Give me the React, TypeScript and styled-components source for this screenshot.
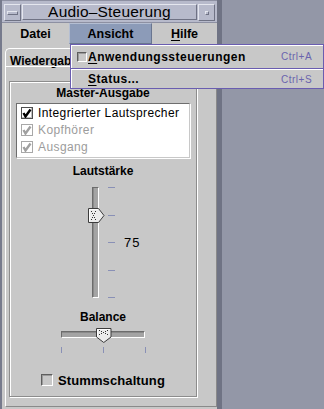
import React from 'react';
import styled, { createGlobalStyle } from 'styled-components';

const GlobalStyle = createGlobalStyle`
  html, body { margin: 0; padding: 0; }
  body {
    background: #9397a7;
    font-family: "Liberation Sans", Arial, sans-serif;
    color: #000;
  }
`;

const Screen = styled.div`
  position: relative;
  width: 324px;
  height: 409px;
  overflow: hidden;
`;

const Window = styled.div`
  width: 222px;
  height: 409px;
  box-sizing: border-box;
  background: #c8c8c8;
  border-left: 2px solid #767a8c;
  border-right: 5px solid #6f7384;
  display: flex;
  flex-direction: column;
`;

const TitleBar = styled.div`
  height: 23px;
  box-sizing: border-box;
  padding: 3px 2px 2px 2px;
  display: flex;
  gap: 1px;
  background: #b7bacb;
  border-top: 1px solid #8d90a2;
  border-bottom: 1px solid #8d90a2;
`;

const FrameButton = styled.div`
  width: 17px;
  height: 17px;
  box-sizing: border-box;
  border: 1px solid;
  border-color: #e4e6ee #6f7284 #6f7284 #e4e6ee;
  display: flex;
  align-items: center;
  justify-content: center;
`;

const Glyph = styled.span<{ $w: number; $h: number }>`
  width: ${p => p.$w}px;
  height: ${p => p.$h}px;
  box-sizing: border-box;
  border: 1px solid;
  border-color: #e4e6ee #6f7284 #6f7284 #e4e6ee;
`;

const TitleText = styled.div`
  flex: 1;
  box-sizing: border-box;
  border: 1px solid;
  border-color: #e4e6ee #6f7284 #6f7284 #e4e6ee;
  display: flex;
  align-items: center;
  justify-content: center;
  font-size: 15.5px;
  letter-spacing: 0.2px;
`;

const MenuBar = styled.div`
  height: 21px;
  display: flex;
  background: #c8c8c8;
`;

const MenuItem = styled.div<{ $w: number; $active?: boolean }>`
  width: ${p => p.$w}px;
  flex: none;
  box-sizing: border-box;
  display: flex;
  align-items: center;
  justify-content: center;
  font-size: 12.5px;
  font-weight: bold;
  background: ${p => (p.$active ? '#8c9bb8' : 'transparent')};
  border: 1px solid;
  border-color: ${p => (p.$active ? '#b4bed2 #6a7690 #6a7690 #b4bed2' : 'transparent')};
`;

const Mnemonic = styled.span`
  text-decoration: underline;
  text-underline-offset: 2px;
`;

const Body = styled.div`
  padding-left: 3px;
  display: flex;
  flex-direction: column;
`;

const TabStrip = styled.div`
  height: 22px;
  display: flex;
  align-items: flex-end;
`;

const Tab = styled.div`
  width: 100px;
  height: 18px;
  box-sizing: border-box;
  padding: 5px 0 0 4px;
  border-top: 1px solid #fff;
  border-left: 1px solid #fff;
  border-right: 1px solid #8a8a8a;
  border-top-left-radius: 5px;
  font-size: 12px;
  font-weight: bold;
  line-height: 14px;
  white-space: nowrap;
`;

const TabPanel = styled.div`
  width: 212px;
  box-sizing: border-box;
  padding: 14px 0 9px 3px;
  border: 1px solid;
  border-color: #fff #8a8a8a #8a8a8a #fff;
`;

const Group = styled.div`
  width: 188px;
  box-sizing: border-box;
  padding: 4px 0 9px 0;
  border: 1px solid #8c8c8c;
  box-shadow: inset 1px 1px 0 #fff, 1px 1px 0 #fff;
  display: flex;
  flex-direction: column;
  align-items: center;
`;

const Label = styled.div<{ $mt?: number }>`
  margin-top: ${p => p.$mt || 0}px;
  font-size: 12px;
  font-weight: bold;
  line-height: 14px;
`;

const List = styled.div`
  margin-top: 3px;
  width: 174px;
  box-sizing: border-box;
  padding-bottom: 2px;
  background: #fff;
  border: 1px solid;
  border-color: #6e6e6e #c8c8c8 #c8c8c8 #6e6e6e;
  box-shadow: 1px 1px 0 #fff;
  align-self: flex-start;
  margin-left: 6px;
`;

const ListRow = styled.div<{ $disabled?: boolean }>`
  height: 17px;
  display: flex;
  align-items: center;
  gap: 5px;
  padding-left: 4px;
  font-size: 12px;
  letter-spacing: 0.4px;
  color: ${p => (p.$disabled ? '#9c9c9c' : '#000')};
`;

const CheckBox = styled.span<{ $size: number; $bg: string; $disabled?: boolean }>`
  width: ${p => p.$size}px;
  height: ${p => p.$size}px;
  flex: none;
  box-sizing: border-box;
  background: ${p => p.$bg};
  border: 1px solid;
  border-color: ${p => (p.$disabled ? '#a8a8a8' : '#4e4e4e')};
  box-shadow: inset -1px -1px 0 ${p => (p.$disabled ? '#fff' : '#c0c0c0')};
  display: flex;
  align-items: center;
  justify-content: center;
`;

const PlainBox = styled.span<{ $size: number }>`
  width: ${p => p.$size}px;
  height: ${p => p.$size}px;
  flex: none;
  box-sizing: border-box;
  background: #c8c8c8;
  border: 1px solid;
  border-color: #5e5e5e #fff #fff #5e5e5e;
  box-shadow: inset 1px 1px 0 #9a9a9a;
`;

const VSliderRow = styled.div`
  margin-top: 9px;
  align-self: flex-start;
  margin-left: 78px;
  display: flex;
  height: 111px;
`;

const ThumbLane = styled.div`
  position: relative;
  width: 17px;
  height: 111px;
`;

const VTrack = styled.div`
  margin-left: 4px;
  width: 7px;
  height: 111px;
  box-sizing: border-box;
  background: #a4a4a4;
  border: 1px solid;
  border-color: #6c6c6c #fff #fff #6c6c6c;
  box-shadow: inset 1px 0 0 #8a8a8a;
`;

const Thumb = styled.svg`
  position: absolute;
`;

const TickColumn = styled.div`
  margin-left: 3px;
  width: 7px;
  display: flex;
  flex-direction: column;
  justify-content: space-between;
`;

const TickRow = styled.div`
  margin-top: 4px;
  width: 85px;
  height: 6px;
  display: flex;
  justify-content: space-between;
`;

const Tick = styled.span<{ $vertical?: boolean }>`
  display: block;
  background: #8990b6;
  width: ${p => (p.$vertical ? 1 : 7)}px;
  height: ${p => (p.$vertical ? 6 : 1)}px;
`;

const Value = styled.div`
  align-self: center;
  margin-left: 9px;
  font-size: 13px;
  letter-spacing: 1px;
`;

const HSlider = styled.div`
  position: relative;
  margin-top: 4px;
  width: 85px;
  height: 15px;
`;

const HTrack = styled.div`
  margin-top: 3px;
  width: 84px;
  height: 7px;
  box-sizing: border-box;
  background: #a4a4a4;
  border: 1px solid;
  border-color: #6c6c6c #fff #fff #6c6c6c;
  box-shadow: inset 0 1px 0 #8a8a8a;
`;

const MuteRow = styled.div`
  margin-top: 20px;
  height: 14px;
  display: flex;
  align-items: center;
  gap: 5px;
  font-size: 13px;
  font-weight: bold;
  letter-spacing: 0.1px;
`;

const Dropdown = styled.div`
  position: absolute;
  left: 70px;
  top: 44px;
  width: 254px;
  box-sizing: border-box;
  background: #c8c8c8;
  border: 1px solid #6a5db0;
  box-shadow: inset 1px 1px 0 #fff;
`;

const DropItem = styled.div<{ $h: number }>`
  height: ${p => p.$h}px;
  display: flex;
  align-items: center;
  padding-left: 6px;
  font-size: 12px;
  font-weight: bold;
  letter-spacing: 0.5px;
`;

const Indent = styled.span<{ $w: number }>`
  width: ${p => p.$w}px;
  flex: none;
`;

const Separator = styled.div`
  height: 1px;
  background: #6a5db0;
  border-bottom: 1px solid #fff;
`;

const Shortcut = styled.span`
  margin-left: auto;
  width: 42px;
  font-size: 10px;
  font-weight: normal;
  letter-spacing: 0.5px;
  color: #6a64ae;
`;

const Check = ({ disabled }: { disabled?: boolean }) => (
  <svg width="10" height="10" viewBox="0 0 10 10">
    <path d="M1.5 5 L3.5 8.5 L8.5 1.5" fill="none" stroke={disabled ? '#a0a0a0' : '#000'} strokeWidth="2.4" />
  </svg>
);

const dots = [
  [3, 3], [7, 3], [4, 5], [6, 5], [5, 7], [4, 9], [6, 9], [3, 11], [7, 11],
];

const VThumb = () => (
  <Thumb width="17" height="16" viewBox="0 0 17 16" style={{ left: 0, top: 21 }}>
    <path d="M0.5 0.5 H10.5 L16 7.5 L10.5 14.5 H0.5 Z" fill="#ececec" stroke="#3c3c3c" />
    <path d="M1.5 13.5 V1.5 H10" fill="none" stroke="#fff" />
    {dots.map(([x, y], i) => (
      <rect key={i} x={x} y={y} width="1" height="1" fill="#333" />
    ))}
  </Thumb>
);

const HThumb = () => (
  <Thumb width="16" height="15" viewBox="0 0 16 15" style={{ left: 35, top: 0 }}>
    <path d="M0.5 0.5 H15 V9 L7.75 14.5 L0.5 9 Z" fill="#ececec" stroke="#3c3c3c" />
    <path d="M1.5 8.5 V1.5 H14" fill="none" stroke="#fff" />
    {dots.map(([x, y], i) => (
      <rect key={i} x={y} y={x - 1} width="1" height="1" fill="#333" />
    ))}
  </Thumb>
);

export default function App() {
  return (
    <Screen>
      <GlobalStyle />
      <Window>
        <TitleBar>
          <FrameButton>
            <Glyph $w={11} $h={4} />
          </FrameButton>
          <TitleText>Audio–Steuerung</TitleText>
          <FrameButton>
            <Glyph $w={4} $h={4} />
          </FrameButton>
        </TitleBar>
        <MenuBar>
          <MenuItem $w={67}>Datei</MenuItem>
          <MenuItem $w={83} $active>Ansicht</MenuItem>
          <MenuItem $w={65}>
            <Mnemonic>H</Mnemonic>ilfe
          </MenuItem>
        </MenuBar>
        <Body>
          <TabStrip>
            <Tab>Wiedergabe</Tab>
          </TabStrip>
          <TabPanel>
            <Group>
              <Label>Master-Ausgabe</Label>
              <List>
                <ListRow>
                  <CheckBox $size={12} $bg="#fff"><Check /></CheckBox>
                  Integrierter Lautsprecher
                </ListRow>
                <ListRow $disabled>
                  <CheckBox $size={12} $bg="#fff" $disabled><Check disabled /></CheckBox>
                  Kopfhörer
                </ListRow>
                <ListRow $disabled>
                  <CheckBox $size={12} $bg="#fff" $disabled><Check disabled /></CheckBox>
                  Ausgang
                </ListRow>
              </List>
              <Label $mt={6}>Lautstärke</Label>
              <VSliderRow>
                <ThumbLane>
                  <VTrack />
                  <VThumb />
                </ThumbLane>
                <TickColumn>
                  <Tick /><Tick /><Tick /><Tick /><Tick />
                </TickColumn>
                <Value>75</Value>
              </VSliderRow>
              <Label $mt={12}>Balance</Label>
              <HSlider>
                <HTrack />
                <HThumb />
              </HSlider>
              <TickRow>
                <Tick $vertical /><Tick $vertical /><Tick $vertical />
              </TickRow>
              <MuteRow>
                <PlainBox $size={12} />
                Stummschaltung
              </MuteRow>
            </Group>
          </TabPanel>
        </Body>
      </Window>
      <Dropdown>
        <DropItem $h={23}>
          <PlainBox $size={10} />
          <Indent $w={1} />
          <Mnemonic>A</Mnemonic>nwendungssteuerungen
          <Shortcut>Ctrl+A</Shortcut>
        </DropItem>
        <Separator />
        <DropItem $h={18}>
          <Indent $w={11} />
          <Mnemonic>S</Mnemonic>tatus...
          <Shortcut>Ctrl+S</Shortcut>
        </DropItem>
      </Dropdown>
    </Screen>
  );
}
